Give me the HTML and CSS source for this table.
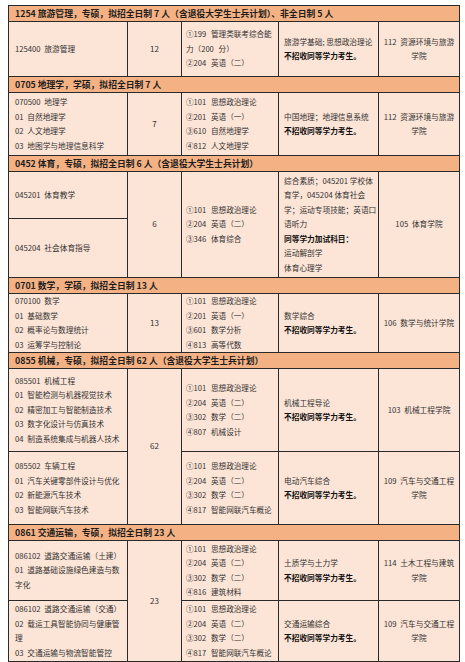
FILE: index.html
```html
<!DOCTYPE html>
<html lang="zh-CN">
<head>
<meta charset="utf-8">
<title>招生计划</title>
<link rel="stylesheet" href="styles.css">
</head>
<body>
<table class="plan">
<colgroup><col class="c1"><col class="c2"><col class="c3"><col class="c4"><col class="c5"></colgroup>
<tbody>
<tr class="hd"><td colspan="5">1254 旅游管理，专硕，拟招全日制 7 人（含退役大学生士兵计划）、非全日制 5 人</td></tr>
<tr class="r1254">
<td class="major">125400 旅游管理</td>
<td class="num">12</td>
<td class="exam">①199 管理类联考综合能<br>力（200 分）<br>②204 英语（二）</td>
<td class="retest">旅游学基础; 思想政治理论<br><b>不招收同等学力考生。</b></td>
<td class="school">112 资源环境与旅游<br>学院</td>
</tr>

<tr class="hd"><td colspan="5">0705 地理学，学硕，拟招全日制 7 人</td></tr>
<tr class="r0705">
<td class="major">070500 地理学<br>01 自然地理学<br>02 人文地理学<br>03 地图学与地理信息科学</td>
<td class="num">7</td>
<td class="exam">①101 思想政治理论<br>②201 英语（一）<br>③610 自然地理学<br>④812 人文地理学</td>
<td class="retest">中国地理；地理信息系统<br><b>不招收同等学力考生。</b></td>
<td class="school">112 资源环境与旅游<br>学院</td>
</tr>

<tr class="hd"><td colspan="5">0452 体育，专硕，拟招全日制 6 人（含退役大学生士兵计划）</td></tr>
<tr class="r0452a">
<td class="major">045201 体育教学</td>
<td class="num" rowspan="2">6</td>
<td class="exam" rowspan="2">①101 思想政治理论<br>②204 英语（二）<br>③346 体育综合</td>
<td class="retest" rowspan="2">综合素质；045201 学校体<br>育学，045204 体育社会<br>学；运动专项技能；英语口<br>语听力<br><b>同等学力加试科目：</b><br>运动解剖学<br>体育心理学</td>
<td class="school" rowspan="2">105 体育学院</td>
</tr>
<tr class="r0452b">
<td class="major">045204 社会体育指导</td>
</tr>

<tr class="hd"><td colspan="5">0701 数学，学硕，拟招全日制 13 人</td></tr>
<tr class="r0701">
<td class="major">070100 数学<br>01 基础数学<br>02 概率论与数理统计<br>03 运筹学与控制论</td>
<td class="num">13</td>
<td class="exam">①101 思想政治理论<br>②201 英语（一）<br>③601 数学分析<br>④813 高等代数</td>
<td class="retest">数学综合<br><b>不招收同等学力考生。</b></td>
<td class="school">106 数学与统计学院</td>
</tr>

<tr class="hd"><td colspan="5">0855 机械，专硕，拟招全日制 62 人（含退役大学生士兵计划）</td></tr>
<tr class="r0855a">
<td class="major">085501 机械工程<br>01 智能检测与机器视觉技术<br>02 精密加工与智能制造技术<br>03 数字化设计与仿真技术<br>04 制造系统集成与机器人技术</td>
<td class="num" rowspan="2">62</td>
<td class="exam">①101 思想政治理论<br>②204 英语（二）<br>③302 数学（二）<br>④807 机械设计</td>
<td class="retest">机械工程导论<br><b>不招收同等学力考生。</b></td>
<td class="school">103 机械工程学院</td>
</tr>
<tr class="r0855b">
<td class="major">085502 车辆工程<br>01 汽车关键零部件设计与优化<br>02 新能源汽车技术<br>03 智能网联汽车技术</td>
<td class="exam">①101 思想政治理论<br>②204 英语（二）<br>③302 数学（二）<br>④817 智能网联汽车概论</td>
<td class="retest">电动汽车综合<br><b>不招收同等学力考生。</b></td>
<td class="school">109 汽车与交通工程<br>学院</td>
</tr>

<tr class="hd"><td colspan="5">0861 交通运输，专硕，拟招全日制 23 人</td></tr>
<tr class="r0861a">
<td class="major">086102 道路交通运输（土建）<br>01 道路基础设施绿色建造与数<br>字化</td>
<td class="num" rowspan="2">23</td>
<td class="exam">①101 思想政治理论<br>②204 英语（二）<br>③302 数学（二）<br>④816 建筑材料</td>
<td class="retest">土质学与土力学<br><b>不招收同等学力考生。</b></td>
<td class="school">114 土木工程与建筑<br>学院</td>
</tr>
<tr class="r0861b">
<td class="major">086102 道路交通运输（交通）<br>02 载运工具智能协同与健康管<br>理<br>03 交通运输与物流智能管控</td>
<td class="exam">①101 思想政治理论<br>②204 英语（二）<br>③302 数学（二）<br>④817 智能网联汽车概论</td>
<td class="retest">交通运输综合<br><b>不招收同等学力考生。</b></td>
<td class="school">109 汽车与交通工程<br>学院</td>
</tr>
</tbody>
</table>
</body>
</html>
```

FILE: styles.css
```css
html, body {
  background: #ffffff;
}
body {
  margin: 5px 5px 3px 8px;
  font-family: "Noto Sans CJK SC", "Noto Sans", sans-serif;
  color: #333333;
}
.plan {
  border-collapse: collapse;
  table-layout: fixed;
  width: 451px;
}
.c1 { width: 119px; }
.c2 { width: 54px; }
.c3 { width: 97px; }
.c4 { width: 100px; }
.c5 { width: 81px; }

.plan td {
  border: 1px solid #2a2a2a;
  background: #fce4d6;
  vertical-align: middle;
  padding: 0;
  line-height: 14.5px;
  white-space: nowrap;
  overflow: hidden;
}
.hd td {
  background: #f4b183;
  font-size: 8.8px;
  font-weight: bold;
  color: #1e1e1e;
  height: 15px;
  padding-left: 6px;
  line-height: 14px;
}
.major {
  font-size: 7.7px;
  padding-left: 6px !important;
  word-spacing: 2px;
}
.num {
  font-size: 8px;
  text-align: center;
}
.exam {
  font-size: 7.6px;
  padding-left: 4px !important;
  word-spacing: 3px;
}
.retest {
  font-size: 7.7px;
  padding-left: 5px !important;
}
.retest b {
  color: #111111;
}
.school {
  font-size: 7.7px;
  text-align: center;
  word-spacing: 2px;
}

.r1254 td { height: 54px; }
.r0705 td { height: 62px; }
.r0452a td { height: 46px; }
.r0452b td { height: 58px; }
.r0701 td { height: 58px; }
.r0855a td { height: 82px; }
.r0855b td { height: 72px; }
.r0861a td { height: 59px; }
.r0861b td { height: 60px; }
```
